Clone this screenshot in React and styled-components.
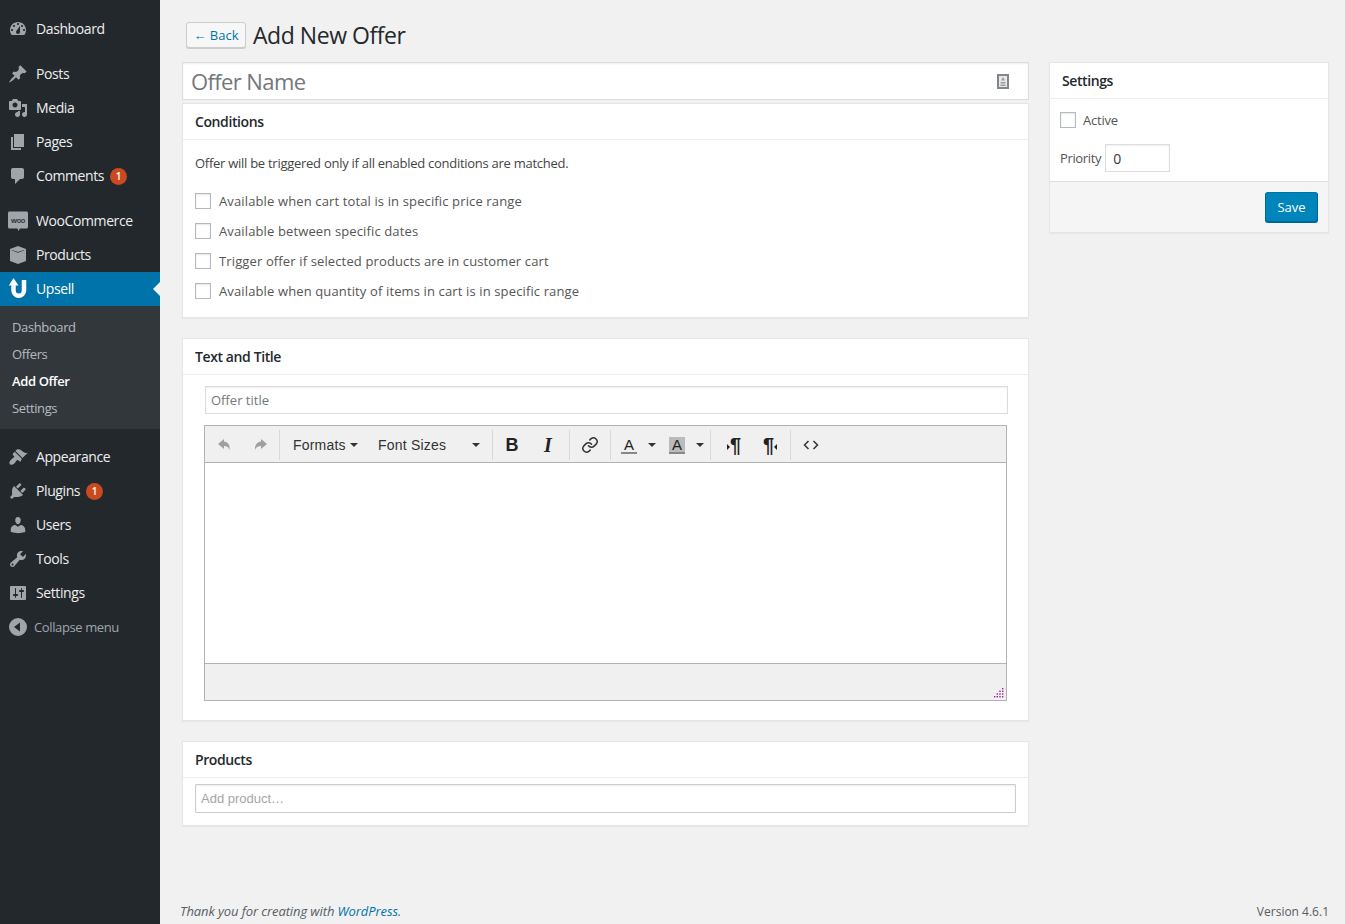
import React from 'react'
import styled, { createGlobalStyle } from 'styled-components'

const GlobalStyle = createGlobalStyle`
  html, body { margin: 0; padding: 0; height: 100%; }
  body {
    background: #f1f1f1;
    font-family: "Open Sans", sans-serif;
    font-size: 13px;
    color: #444;
  }
`

const paths = {
  dashboard: 'M3.76 16h12.48c1.1-1.37 1.76-3.11 1.76-5 0-4.42-3.58-8-8-8s-8 3.58-8 8c0 1.89.66 3.63 1.76 5zM10 4c.55 0 1 .45 1 1s-.45 1-1 1-1-.45-1-1 .45-1 1-1zM6 6c.55 0 1 .45 1 1s-.45 1-1 1-1-.45-1-1 .45-1 1-1zm8 0c.55 0 1 .45 1 1s-.45 1-1 1-1-.45-1-1 .45-1 1-1zm-5.37 5.55L12 7v6c0 1.1-.9 2-2 2s-2-.9-2-2c0-.57.24-1.08.63-1.45zM4 10c.55 0 1 .45 1 1s-.45 1-1 1-1-.45-1-1 .45-1 1-1zm12 0c.55 0 1 .45 1 1s-.45 1-1 1-1-.45-1-1 .45-1 1-1z',
  posts: 'M10.44 3.02l1.82-1.82 6.36 6.35-1.83 1.82c-1.05-.68-2.48-.57-3.41.36l-.75.75c-.92.93-1.04 2.35-.35 3.41l-1.83 1.82-2.41-2.41-2.8 2.79c-.42.42-3.38 2.71-3.8 2.29s1.86-3.39 2.28-3.81l2.79-2.79L4.1 9.36l1.83-1.82c1.05.69 2.48.57 3.4-.36l.75-.75c.93-.92 1.05-2.35.36-3.41z',
  media: 'M13 11V4c0-.55-.45-1-1-1h-1.67L9 1H5L3.67 3H2c-.55 0-1 .45-1 1v7c0 .55.45 1 1 1h10c.55 0 1-.45 1-1zM7 4.5c1.38 0 2.5 1.12 2.5 2.5S8.38 9.5 7 9.5 4.5 8.38 4.5 7 5.62 4.5 7 4.5zM14 6h5v10.5c0 1.38-1.12 2.5-2.5 2.5S14 17.88 14 16.5s1.12-2.5 2.5-2.5c.17 0 .34.02.5.05V9h-3V6zm-4 8.05V13h2v3.5c0 1.38-1.12 2.5-2.5 2.5S7 17.88 7 16.5 8.12 14 9.5 14c.17 0 .34.02.5.05z',
  pages: 'M6 15V2h10v13H6zm-1 1h8v2H3V5h2v11z',
  comments: 'M5 2h9c1.1 0 2 .9 2 2v7c0 1.1-.9 2-2 2h-2l-5 5v-5H5c-1.1 0-2-.9-2-2V4c0-1.1.9-2 2-2z',
  products: 'M10 1l8 3v12l-8 3-8-3V4l8-3zM3.500 5.200L10 7.800l6.500-2.600-.5-.3L10 7 4 4.900z',
  appearance: 'M14.48 11.06L7.41 3.99l1.5-1.5c.5-.56 2.3-.47 3.51.32 1.21.8 1.43 1.28 2.91 2.1 1.18.64 2.45 1.26 4.45.85zm-.71.71L6.7 4.7 4.93 6.47c-.39.39-.39 1.02 0 1.41l1.06 1.06c.39.39.39 1.03 0 1.42-.6.6-1.43 1.11-2.21 1.69-.35.26-.7.53-1.01.84-1.43 1.43-1.78 3.4-.8 4.38s2.95.63 4.38-.8c.31-.31.58-.66.84-1.01.58-.78 1.09-1.61 1.69-2.21.39-.39 1.03-.39 1.42 0l1.06 1.06c.39.39 1.02.39 1.41 0z',
  plugins: 'M13.11 4.36L9.87 7.6 8 5.73l3.24-3.24c.35-.34 1.05-.2 1.56.32.52.51.66 1.21.31 1.55zm-8 1.77l.91-1.12 9.01 9.01-1.19.84c-.71.71-2.63 1.16-3.82 1.16H6.14L4.9 17.26c-.59.59-1.54.59-2.12 0-.59-.58-.59-1.53 0-2.12l1.24-1.24v-3.88c0-1.13.4-3.19 1.09-3.89zm7.26 3.97l3.24-3.24c.34-.35 1.04-.21 1.55.31.52.51.66 1.21.31 1.55l-3.24 3.25z',
  users: 'M10 9.25c-2.27 0-2.73-3.44-2.73-3.44C7 4.02 7.82 2 9.97 2c2.16 0 2.98 2.02 2.71 3.81 0 0-.41 3.44-2.68 3.44zm0 2.57L12.72 10c2.39 0 4.52 2.33 4.52 4.53v2.49s-3.65 1.13-7.24 1.13c-3.65 0-7.24-1.13-7.24-1.13v-2.49c0-2.25 1.94-4.48 4.47-4.48z',
  tools: 'M16.68 9.77c-1.34 1.34-3.3 1.67-4.95.99l-5.41 6.52c-.99.99-2.59.99-3.58 0s-.99-2.59 0-3.57l6.52-5.42c-.68-1.65-.35-3.61.99-4.95 1.28-1.28 3.12-1.62 4.72-1.06l-2.89 2.89 2.82 2.82 2.86-2.87c.53 1.58.18 3.39-1.08 4.65zM3.81 16.21c.4.39 1.04.39 1.43 0 .4-.4.4-1.04 0-1.43-.39-.4-1.03-.4-1.43 0-.39.39-.39 1.03 0 1.43z',
  settings: 'M18 16V4c0-.55-.45-1-1-1H3c-.55 0-1 .45-1 1v12c0 .55.45 1 1 1h14c.55 0 1-.45 1-1zM8 11h1c.55 0 1 .45 1 1s-.45 1-1 1H8v1.5c0 .28-.22.5-.5.5s-.5-.22-.5-.5V13H6c-.55 0-1-.45-1-1s.45-1 1-1h1V5.5c0-.28.22-.5.5-.5s.5.22.5.5V11zm5-2h-1c-.55 0-1-.45-1-1s.45-1 1-1h1V5.500c0-.28.22-.5.5-.5s.5.22.5.5V7h1c.55 0 1 .45 1 1s-.45 1-1 1h-1v5.500c0 .28-.22.5-.5.5s-.5-.22-.5-.5V9z',
  collapse: 'M10 1a9 9 0 1 0 0 18 9 9 0 0 0 0-18zm2 13.500L6 10l6-4.500v9z',
}

function MenuIcon({ name }) {
  return (
    <IconSvg viewBox="0 0 20 20">
      <path d={paths[name]} />
    </IconSvg>
  )
}

function WooIcon() {
  return (
    <IconBox>
      <svg width="20" height="20" viewBox="0 0 20 20">
        <path d="M1.500.5h17c.8 0 1.500.7 1.500 1.500v14c0 .8-.7 1.500-1.500 1.500H12L10.500 20l-1-2.500h-8C.7 17.500 0 16.800 0 16V2C0 1.200.7.500 1.500.5z" fill="#a0a5aa" />
        <text x="10" y="11.500" textAnchor="middle" fontSize="7.500" fontFamily="Open Sans, sans-serif" fontWeight="600" fill="#23282d">woo</text>
      </svg>
    </IconBox>
  )
}

function UpsellIcon() {
  return (
    <IconBox>
      <svg width="20" height="24" viewBox="0 0 20 24">
        <path d="M5.500 8V13.500a5.250 5.250 0 0 0 10.500 0V3" fill="none" stroke="#fff" strokeWidth="4.500" />
        <path d="M5.500 1L10.500 8.500H.8z" fill="#fff" />
      </svg>
    </IconBox>
  )
}

const topMenu = [
  { icon: 'posts', label: 'Posts' },
  { icon: 'media', label: 'Media' },
  { icon: 'pages', label: 'Pages' },
  { icon: 'comments', label: 'Comments', badge: 1 },
]

const bottomMenu = [
  { icon: 'appearance', label: 'Appearance' },
  { icon: 'plugins', label: 'Plugins', badge: 1 },
  { icon: 'users', label: 'Users' },
  { icon: 'tools', label: 'Tools' },
  { icon: 'settings', label: 'Settings' },
]

const conditions = [
  'Available when cart total is in specific price range',
  'Available between specific dates',
  'Trigger offer if selected products are in customer cart',
  'Available when quantity of items in cart is in specific range',
]

function renderItem(item) {
  return (
    <MenuItem key={item.label}>
      <MenuIcon name={item.icon} />
      <MenuLabel>{item.label}</MenuLabel>
      {item.badge && <Badge>{item.badge}</Badge>}
    </MenuItem>
  )
}

export default function App() {
  return (
    <Page>
      <GlobalStyle />
      <Sidebar>
        <MenuItem>
          <MenuIcon name="dashboard" />
          <MenuLabel>Dashboard</MenuLabel>
        </MenuItem>
        <Separator />
        {topMenu.map(renderItem)}
        <Separator />
        <MenuItem>
          <WooIcon />
          <MenuLabel>WooCommerce</MenuLabel>
        </MenuItem>
        <MenuItem>
          <MenuIcon name="products" />
          <MenuLabel>Products</MenuLabel>
        </MenuItem>
        <MenuItem $active>
          <UpsellIcon />
          <MenuLabel>Upsell</MenuLabel>
          <ActiveArrow />
        </MenuItem>
        <Submenu>
          <SubItem>Dashboard</SubItem>
          <SubItem>Offers</SubItem>
          <SubItem $current>Add Offer</SubItem>
          <SubItem>Settings</SubItem>
        </Submenu>
        <Separator />
        {bottomMenu.map(renderItem)}
        <CollapseRow>
          <MenuIcon name="collapse" />
          <span>Collapse menu</span>
        </CollapseRow>
      </Sidebar>

      <Main>
        <Header>
          <BackButton>← Back</BackButton>
          <Title>Add New Offer</Title>
        </Header>
        <Columns>
          <LeftColumn>
            <NameBox>
              <NameText>Offer Name</NameText>
              <svg width="12" height="15" viewBox="0 0 12 15">
                <rect x="1" y="1" width="10" height="13" fill="#e8e8e8" stroke="#82878c" strokeWidth="2" />
                <path d="M6 3L8 6.500H4zM3.500 8h5v1.500h-5zM3.500 10.500h5V12h-5z" fill="#9a9ea3" />
              </svg>
            </NameBox>

            <ConditionsCard>
              <CardTitle>Conditions</CardTitle>
              <ConditionsBody>
                <Intro>Offer will be triggered only if all enabled conditions are matched.</Intro>
                <CheckList>
                  {conditions.map((c) => (
                    <CheckRow key={c}>
                      <CheckBox />
                      <span>{c}</span>
                    </CheckRow>
                  ))}
                </CheckList>
              </ConditionsBody>
            </ConditionsCard>

            <Card>
              <CardTitle>Text and Title</CardTitle>
              <EditorBody>
                <TitleField>Offer title</TitleField>
                <Editor>
                  <Toolbar>
                    <FirstGroup>
                      <ToolButton>
                        <svg width="16" height="16" viewBox="0 0 16 16"><path d="M8 2L2 7l6 5V9c2.500 0 4.500.8 5.500 4 .6-4.500-1-8-5.500-8.500z" fill="#a0a0a0" /></svg>
                      </ToolButton>
                      <ToolButton>
                        <svg width="16" height="16" viewBox="0 0 16 16"><path d="M9 2l6 5-6 5V9c-3 0-5 1-6 4-.4-4 1.500-8 6-8.500z" fill="#a0a0a0" /></svg>
                      </ToolButton>
                    </FirstGroup>
                    <FormatGroup>
                      <FormatsMenu>Formats<Caret /></FormatsMenu>
                      <SizesMenu>Font Sizes<Caret /></SizesMenu>
                    </FormatGroup>
                    <MarkGroup>
                      <ToolButton><BoldGlyph>B</BoldGlyph></ToolButton>
                      <ToolButton><ItalicGlyph>I</ItalicGlyph></ToolButton>
                    </MarkGroup>
                    <LinkGroup>
                      <ToolButton>
                        <svg width="18" height="18" viewBox="0 0 24 24" fill="none" stroke="#333" strokeWidth="2" strokeLinecap="round" strokeLinejoin="round">
                          <path d="M10 13a5 5 0 0 0 7.500.5l3-3a5 5 0 0 0-7-7l-1.700 1.700" />
                          <path d="M14 11a5 5 0 0 0-7.500-.5l-3 3a5 5 0 0 0 7 7l1.700-1.700" />
                        </svg>
                      </ToolButton>
                    </LinkGroup>
                    <ToolGroup>
                      <ColorButton>
                        <ColorGlyph>A</ColorGlyph>
                        <Caret />
                      </ColorButton>
                      <ColorButton>
                        <ColorGlyph $filled>A</ColorGlyph>
                        <Caret />
                      </ColorButton>
                    </ToolGroup>
                    <DirGroup>
                      <ToolButton>
                        <DirGlyph><SmallTriangle $dir="right" />¶</DirGlyph>
                      </ToolButton>
                      <ToolButton>
                        <DirGlyph>¶<SmallTriangle $dir="left" /></DirGlyph>
                      </ToolButton>
                    </DirGroup>
                    <LastGroup>
                      <ToolButton>
                        <svg width="16" height="16" viewBox="0 0 16 16" fill="none" stroke="#333" strokeWidth="1.500">
                          <path d="M5.500 4L1.500 8l4 4M10.500 4l4 4-4 4" />
                        </svg>
                      </ToolButton>
                    </LastGroup>
                  </Toolbar>
                  <EditArea />
                  <StatusBar>
                    <svg width="10" height="10" viewBox="0 0 10 10" fill="#a020a0">
                      <rect x="8" y="0" width="1.400" height="1.400" /><rect x="8" y="2.600" width="1.400" height="1.400" />
                      <rect x="8" y="5.300" width="1.400" height="1.400" /><rect x="8" y="8" width="1.400" height="1.400" />
                      <rect x="5.300" y="2.600" width="1.400" height="1.400" /><rect x="5.300" y="5.300" width="1.400" height="1.400" />
                      <rect x="5.300" y="8" width="1.400" height="1.400" /><rect x="2.600" y="5.300" width="1.400" height="1.400" />
                      <rect x="2.600" y="8" width="1.400" height="1.400" /><rect x="0" y="8" width="1.400" height="1.400" />
                    </svg>
                  </StatusBar>
                </Editor>
              </EditorBody>
            </Card>

            <Card>
              <CardTitle>Products</CardTitle>
              <ProductsBody>
                <ProductField>Add product…</ProductField>
              </ProductsBody>
            </Card>
          </LeftColumn>

          <RightColumn>
            <CardTitle>Settings</CardTitle>
            <SettingsBody>
              <ActiveRow>
                <CheckBox />
                <span>Active</span>
              </ActiveRow>
              <PriorityRow>
                <span>Priority</span>
                <PriorityInput>0</PriorityInput>
              </PriorityRow>
            </SettingsBody>
            <SettingsFooter>
              <SaveButton>Save</SaveButton>
            </SettingsFooter>
          </RightColumn>
        </Columns>

        <Footer>
          <Thanks>Thank you for creating with <FooterLink>WordPress</FooterLink>.</Thanks>
          <span>Version 4.6.1</span>
        </Footer>
      </Main>
    </Page>
  )
}

const Page = styled.div`
  display: flex;
  min-height: 924px;
`

const Sidebar = styled.nav`
  width: 160px;
  flex-shrink: 0;
  background: #23282d;
  padding-top: 12px;
  box-sizing: border-box;
`

const IconSvg = styled.svg`
  width: 20px;
  height: 20px;
  fill: #a0a5aa;
  flex-shrink: 0;
`

const IconBox = styled.span`
  width: 20px;
  height: 24px;
  display: flex;
  align-items: center;
  justify-content: center;
  flex-shrink: 0;
`

const MenuItem = styled.div`
  position: relative;
  height: 34px;
  display: flex;
  align-items: center;
  padding-left: 8px;
  color: ${(p) => (p.$active ? '#fff' : '#eee')};
  background: ${(p) => (p.$active ? '#0073aa' : 'transparent')};
  font-size: 14px;
  letter-spacing: -0.4px;
`

const MenuLabel = styled.span`
  margin: 0 0 2px 8px;
`

const Badge = styled.span`
  width: 17px;
  height: 17px;
  margin-left: 6px;
  border-radius: 50%;
  background: #ca4a1f;
  color: #fff;
  font-size: 10px;
  font-weight: 600;
  letter-spacing: 0;
  display: flex;
  align-items: center;
  justify-content: center;
`

const ActiveArrow = styled.span`
  position: absolute;
  right: 0;
  top: 10px;
  border: 7px solid transparent;
  border-left-width: 0;
  border-right-color: #f1f1f1;
`

const Separator = styled.div`
  height: 11px;
`

const Submenu = styled.div`
  background: #32373c;
  padding: 7px 0 8px;
`

const SubItem = styled.div`
  height: 27px;
  line-height: 29px;
  padding-left: 12px;
  font-size: 13px;
  letter-spacing: -0.38px;
  color: ${(p) => (p.$current ? '#fff' : 'rgba(240,245,250,.7)')};
  font-weight: ${(p) => (p.$current ? 600 : 400)};
`

const CollapseRow = styled.div`
  height: 34px;
  display: flex;
  align-items: center;
  gap: 6px;
  padding-left: 8px;
  font-size: 13px;
  letter-spacing: -0.38px;
  color: #a0a5aa;
`

const Main = styled.main`
  flex: 1;
  min-width: 0;
  display: flex;
  flex-direction: column;
  padding: 0 16px 0 22px;
`

const Header = styled.div`
  display: flex;
  align-items: center;
  height: 62px;
  padding: 8px 0 0 4px;
  box-sizing: border-box;
`

const BackButton = styled.div`
  height: 26px;
  width: 60px;
  box-sizing: border-box;
  border: 1px solid #ccc;
  border-radius: 3px;
  background: #f7f7f7;
  box-shadow: 0 1px 0 #ccc;
  color: #0073aa;
  font-size: 13px;
  line-height: 24px;
  text-align: center;
`

const Title = styled.h1`
  margin: 0 0 0 7px;
  font-size: 23px;
  font-weight: 400;
  line-height: 29px;
  letter-spacing: -0.45px;
  color: #23282d;
`

const Columns = styled.div`
  display: flex;
  align-items: flex-start;
  gap: 20px;
`

const LeftColumn = styled.div`
  width: 847px;
  display: flex;
  flex-direction: column;
  gap: 20px;
`

const NameBox = styled.div`
  height: 38px;
  margin-bottom: -17px;
  box-sizing: border-box;
  background: #fff;
  border: 1px solid #ddd;
  box-shadow: inset 0 1px 2px rgba(0,0,0,.07);
  display: flex;
  align-items: center;
  justify-content: space-between;
  padding: 0 19px 0 8px;
`

const NameText = styled.span`
  font-size: 22px;
  letter-spacing: -0.6px;
  color: #72777c;
`

const Card = styled.section`
  background: #fff;
  border: 1px solid #e5e5e5;
  box-shadow: 0 1px 1px rgba(0,0,0,.04);
`

const ConditionsCard = styled(Card)`
  height: 215px;
  box-sizing: border-box;
`

const CardTitle = styled.h2`
  margin: 0;
  height: 36px;
  box-sizing: border-box;
  padding: 0 12px;
  border-bottom: 1px solid #eee;
  font-size: 14px;
  font-weight: 600;
  line-height: 35px;
  letter-spacing: -0.4px;
  color: #23282d;
`

const ConditionsBody = styled.div`
  padding: 14px 12px 0;
`

const Intro = styled.p`
  margin: 0;
  line-height: 19px;
  letter-spacing: -0.27px;
`

const CheckList = styled.div`
  margin-top: 18px;
  display: flex;
  flex-direction: column;
  gap: 10px;
`

const CheckRow = styled.label`
  display: flex;
  align-items: center;
  height: 20px;
  gap: 8px;
  color: #555;
  letter-spacing: 0.13px;
`

const CheckBox = styled.span`
  width: 16px;
  height: 16px;
  box-sizing: border-box;
  border: 1px solid #b4b9be;
  background: #fff;
  box-shadow: inset 0 1px 2px rgba(0,0,0,.1);
  flex-shrink: 0;
`

const EditorBody = styled.div`
  padding: 11px 20px 19px 21px;
`

const TitleField = styled.div`
  height: 28px;
  box-sizing: border-box;
  width: 803px;
  margin-left: 1px;
  border: 1px solid #ddd;
  box-shadow: inset 0 1px 2px rgba(0,0,0,.07);
  padding: 0 5px;
  line-height: 27px;
  color: #72777c;
  font-size: 13px;
`

const Editor = styled.div`
  margin-top: 11px;
  border: 1px solid #b2b2b2;
  width: 803px;
  box-sizing: border-box;
`

const Toolbar = styled.div`
  height: 34px;
  padding: 2px 0 0 1px;
  background: #f0f0f0;
  border-bottom: 1px solid #b2b2b2;
  box-sizing: content-box;
  display: flex;
  align-items: center;
`

const ToolGroup = styled.div`
  height: 30px;
  display: flex;
  align-items: center;
  padding-right: 2px;
  margin-right: 1px;
  border-right: 1px solid #d9d9d9;
`

const FirstGroup = styled(ToolGroup)`
  padding-right: 1px;
`

const FormatGroup = styled(ToolGroup)`
  padding-right: 0;
`

const MarkGroup = styled(ToolGroup)`
  padding-right: 3px;
`

const LinkGroup = styled(ToolGroup)`
  padding-left: 1px;
`

const DirGroup = styled(ToolGroup)`
  padding-left: 4px;
`

const LastGroup = styled(ToolGroup)`
  border-right: 0;
  padding-left: 1px;
`

const ToolButton = styled.div`
  width: 36px;
  height: 30px;
  display: flex;
  align-items: center;
  justify-content: center;
  color: #333;
`

const FormatsMenu = styled.div`
  width: 85px;
  padding-left: 12px;
  box-sizing: border-box;
  display: flex;
  align-items: center;
  gap: 4px;
  font-family: "Liberation Sans", Arial, sans-serif;
  font-size: 14px;
  letter-spacing: 0.2px;
  color: #333;
`

const SizesMenu = styled(FormatsMenu)`
  width: 126px;
  justify-content: space-between;
  padding-right: 12px;
`

const Caret = styled.span`
  width: 0;
  height: 0;
  border-style: solid;
  border-width: 4px 4px 0;
  border-color: #333 transparent transparent;
`

const BoldGlyph = styled.span`
  font-family: "Liberation Sans", Arial, sans-serif;
  font-size: 18px;
  font-weight: 700;
  color: #222;
`

const ItalicGlyph = styled.span`
  font-family: "Liberation Serif", serif;
  font-size: 20px;
  font-style: italic;
  font-weight: 700;
  color: #222;
`

const ColorButton = styled.div`
  width: 48px;
  display: flex;
  align-items: center;
  justify-content: flex-end;
  gap: 11px;
  padding-right: 4px;
  box-sizing: border-box;
`

const ColorGlyph = styled.span`
  width: 16px;
  height: 17px;
  box-sizing: border-box;
  font-family: "Liberation Sans", Arial, sans-serif;
  font-size: 15px;
  line-height: 15px;
  text-align: center;
  color: #222;
  background: ${(p) => (p.$filled ? '#bbb' : 'transparent')};
  border-bottom: 2px solid #888;
`

const DirGlyph = styled.span`
  display: flex;
  align-items: center;
  font-family: "Liberation Sans", Arial, sans-serif;
  font-size: 20px;
  font-weight: 700;
  color: #222;
`

const SmallTriangle = styled.span`
  width: 0;
  height: 0;
  border-style: solid;
  border-width: 3.5px 0 3.5px 3.5px;
  border-color: transparent transparent transparent #222;
  margin-top: 4px;
  transform: ${(p) => (p.$dir === 'left' ? 'scaleX(-1)' : 'none')};
`

const EditArea = styled.div`
  height: 200px;
  background: #fff;
`

const StatusBar = styled.div`
  height: 34px;
  box-sizing: content-box;
  background: #f0f0f0;
  border-top: 1px solid #b2b2b2;
  display: flex;
  align-items: flex-end;
  justify-content: flex-end;
  padding: 0 2px 2px 0;
`

const ProductsBody = styled.div`
  padding: 6px 12px 12px;
`

const ProductField = styled.div`
  height: 29px;
  box-sizing: border-box;
  border: 1px solid #ccc;
  border-radius: 1px;
  box-shadow: inset 0 1px 2px rgba(0,0,0,.07);
  padding-left: 5px;
  line-height: 27px;
  font-family: "Liberation Sans", Arial, sans-serif;
  font-size: 13px;
  color: #a5a5a5;
`

const RightColumn = styled(Card)`
  width: 280px;
  box-sizing: border-box;
`

const SettingsBody = styled.div`
  padding: 13px 10px 9px;
  height: 60px;
`

const ActiveRow = styled.div`
  display: flex;
  align-items: center;
  height: 16px;
  gap: 7px;
  color: #555;
  letter-spacing: -0.2px;
`

const PriorityRow = styled.div`
  margin-top: 16px;
  display: flex;
  align-items: center;
  gap: 4px;
  color: #555;
  letter-spacing: -0.35px;
`

const PriorityInput = styled.div`
  width: 65px;
  height: 28px;
  box-sizing: border-box;
  border: 1px solid #ddd;
  box-shadow: inset 0 1px 2px rgba(0,0,0,.07);
  padding-left: 7px;
  line-height: 27px;
  font-size: 14px;
  color: #32373c;
`

const SettingsFooter = styled.div`
  background: #f5f5f5;
  border-top: 1px solid #ddd;
  padding: 10px 10px 9px;
  display: flex;
  justify-content: flex-end;
`

const SaveButton = styled.div`
  width: 53px;
  height: 30px;
  margin-bottom: 1px;
  box-sizing: border-box;
  background: #0085ba;
  border: 1px solid #006799;
  border-top-color: #0073aa;
  border-radius: 3px;
  box-shadow: 0 1px 0 #006799;
  color: #fff;
  text-align: center;
  line-height: 28px;
  font-size: 13px;
`

const Footer = styled.footer`
  margin-top: auto;
  margin-left: -2px;
  height: 26px;
  display: flex;
  justify-content: space-between;
  color: #555d66;
  font-size: 12px;
  line-height: 28px;
`

const Thanks = styled.span`
  font-size: 13px;
  font-style: italic;
  letter-spacing: -0.1px;
  line-height: 26px;
`

const FooterLink = styled.span`
  color: #0073aa;
`
